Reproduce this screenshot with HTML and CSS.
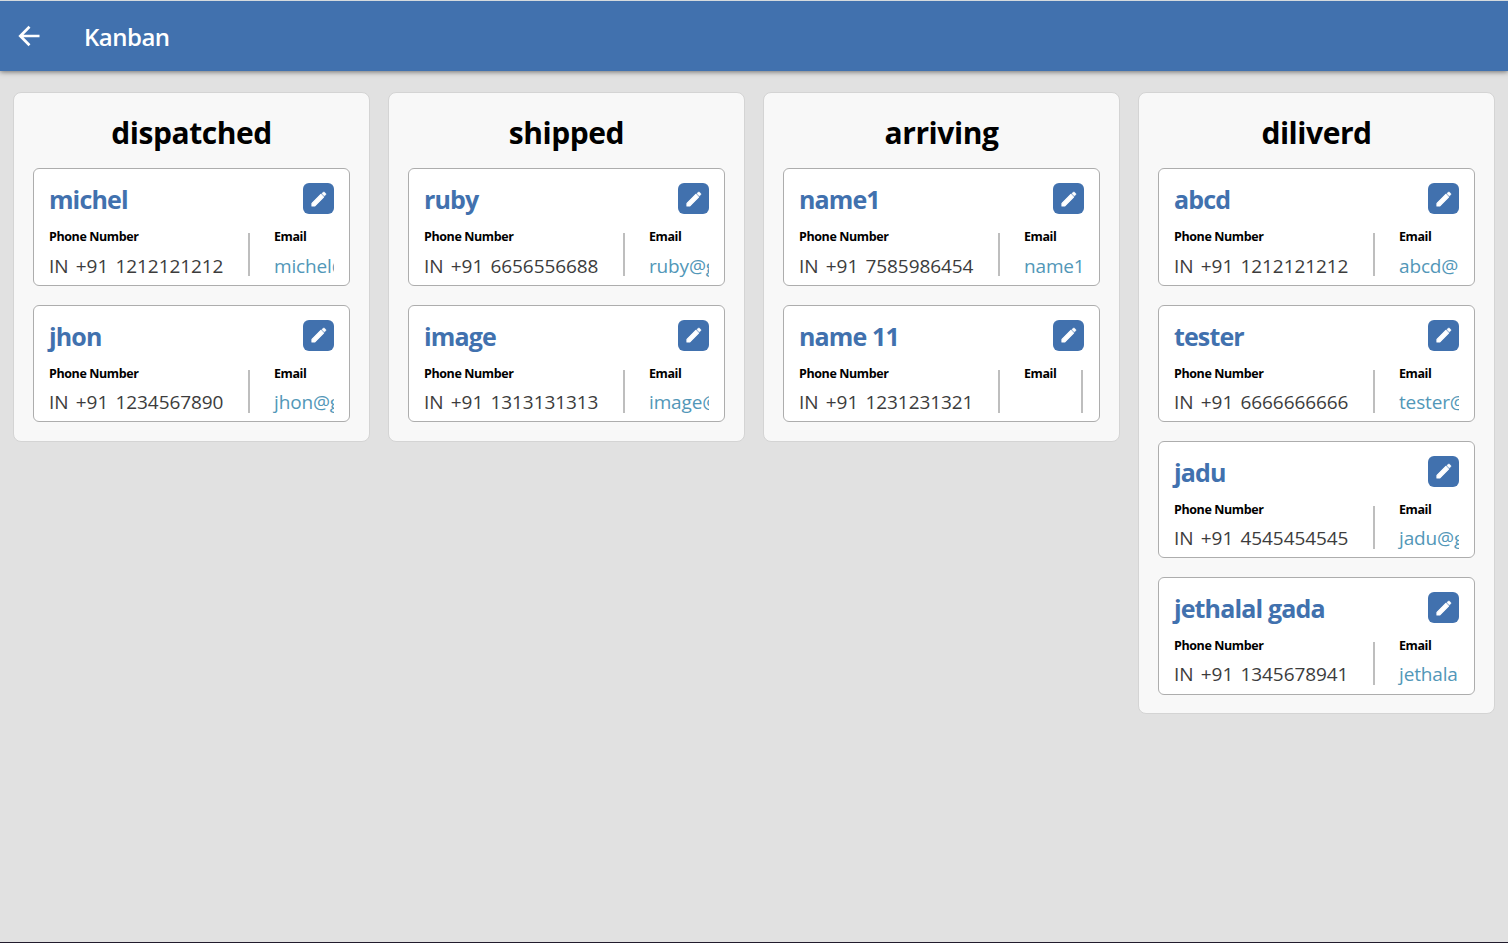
FILE: index.html
```html
<!DOCTYPE html>
<html lang="en">
<head>
<meta charset="utf-8">
<title>Kanban</title>
<link rel="stylesheet" href="styles.css">
</head>
<body>
<svg width="0" height="0" class="defs">
  <symbol id="pencil" viewBox="0 0 16 16">
    <path d="M1 15v-2.600L9.900 3.500l2.600 2.600L3.600 15z" stroke="#fff" stroke-width="1.200" stroke-linejoin="round"/>
    <path d="M10.900 2.600l1.100-1.100a1.300 1.300 0 0 1 1.800 0l.700.700a1.300 1.300 0 0 1 0 1.800l-1.100 1.100z" stroke="#fff" stroke-width=".6"/>
  </symbol>
</svg>
<header class="topbar">
  <svg class="back" viewBox="0 0 24 24"><path d="M22.500 12H4M12.500 2.800L3.300 12l9.200 9.200"/></svg>
  <h1 class="title">Kanban</h1>
</header>
<main class="board">
  <section class="column">
    <h2 class="heading">dispatched</h2>
    <article class="card">
      <div class="top"><h3 class="name">michel</h3><span class="edit"><svg><use href="#pencil"/></svg></span></div>
      <div class="fields"><div class="field phone"><b>Phone Number</b><span>IN +91 1212121212</span></div><div class="field email"><b>Email</b><a>michel@</a></div></div>
    </article>
    <article class="card">
      <div class="top"><h3 class="name">jhon</h3><span class="edit"><svg><use href="#pencil"/></svg></span></div>
      <div class="fields"><div class="field phone"><b>Phone Number</b><span>IN +91 1234567890</span></div><div class="field email"><b>Email</b><a>jhon@g</a></div></div>
    </article>
  </section>
  <section class="column">
    <h2 class="heading">shipped</h2>
    <article class="card">
      <div class="top"><h3 class="name">ruby</h3><span class="edit"><svg><use href="#pencil"/></svg></span></div>
      <div class="fields"><div class="field phone"><b>Phone Number</b><span>IN +91 6656556688</span></div><div class="field email"><b>Email</b><a>ruby@g</a></div></div>
    </article>
    <article class="card">
      <div class="top"><h3 class="name">image</h3><span class="edit"><svg><use href="#pencil"/></svg></span></div>
      <div class="fields"><div class="field phone"><b>Phone Number</b><span>IN +91 1313131313</span></div><div class="field email"><b>Email</b><a>image@</a></div></div>
    </article>
  </section>
  <section class="column">
    <h2 class="heading">arriving</h2>
    <article class="card">
      <div class="top"><h3 class="name">name1</h3><span class="edit"><svg><use href="#pencil"/></svg></span></div>
      <div class="fields"><div class="field phone"><b>Phone Number</b><span>IN +91 7585986454</span></div><div class="field email"><b>Email</b><a>name1</a></div></div>
    </article>
    <article class="card">
      <div class="top"><h3 class="name">name 11</h3><span class="edit"><svg><use href="#pencil"/></svg></span></div>
      <div class="fields"><div class="field phone"><b>Phone Number</b><span>IN +91 1231231321</span></div><div class="field email empty"><b>Email</b></div></div>
    </article>
  </section>
  <section class="column">
    <h2 class="heading">diliverd</h2>
    <article class="card">
      <div class="top"><h3 class="name">abcd</h3><span class="edit"><svg><use href="#pencil"/></svg></span></div>
      <div class="fields"><div class="field phone"><b>Phone Number</b><span>IN +91 1212121212</span></div><div class="field email"><b>Email</b><a>abcd@</a></div></div>
    </article>
    <article class="card">
      <div class="top"><h3 class="name">tester</h3><span class="edit"><svg><use href="#pencil"/></svg></span></div>
      <div class="fields"><div class="field phone"><b>Phone Number</b><span>IN +91 6666666666</span></div><div class="field email"><b>Email</b><a>tester@</a></div></div>
    </article>
    <article class="card">
      <div class="top"><h3 class="name">jadu</h3><span class="edit"><svg><use href="#pencil"/></svg></span></div>
      <div class="fields"><div class="field phone"><b>Phone Number</b><span>IN +91 4545454545</span></div><div class="field email"><b>Email</b><a>jadu@g</a></div></div>
    </article>
    <article class="card">
      <div class="top"><h3 class="name">jethalal gada</h3><span class="edit"><svg><use href="#pencil"/></svg></span></div>
      <div class="fields"><div class="field phone"><b>Phone Number</b><span>IN +91 1345678941</span></div><div class="field email"><b>Email</b><a>jethalal</a></div></div>
    </article>
  </section>
</main>
</body>
</html>
```
FILE: styles.css
```css
* { box-sizing: border-box; }
body {
  margin: 0;
  height: 943px;
  overflow: hidden;
  display: flex;
  flex-direction: column;
  background: #e1e1e1;
  border-top: 1px solid #d5dadd;
  border-bottom: 1px solid #211b2c;
  font-family: "Open Sans", "Noto Sans", sans-serif;
}
.defs { display: none; }
h1, h2, h3 { margin: 0; white-space: nowrap; }
.topbar {
  flex: none;
  height: 70px;
  padding-left: 17px;
  display: flex;
  align-items: center;
  background: #4171ae;
  box-shadow: 0 1px 5px rgba(0, 0, 0, .5);
}
.back {
  width: 24px;
  height: 24px;
  fill: none;
  stroke: #fff;
  stroke-width: 2.7;
}
.title {
  margin-left: 43px;
  padding-top: 2px;
  color: #fff;
  font-size: 24px;
  font-weight: 600;
  line-height: 32px;
  letter-spacing: -.5px;
}
.board {
  flex: 1;
  padding: 22px 13px 0;
  display: flex;
  align-items: flex-start;
  gap: 18px;
}
.column {
  flex: none;
  width: 357px;
  margin-top: -1px;
  padding: 19px 19px 18.75px;
  display: flex;
  flex-direction: column;
  gap: 18.75px;
  background: #f8f8f8;
  border: 1px solid #d4d4d4;
  border-radius: 8px;
}
.heading {
  height: 37.5px;
  text-align: center;
  color: #000;
  font-size: 30px;
  font-weight: 700;
  line-height: 41px;
  letter-spacing: -.45px;
}
.card {
  width: 317px;
  height: 117.5px;
  padding: 14px 15px 0;
  background: #fff;
  border: 1px solid #adadad;
  border-radius: 6px;
}
.top {
  height: 31px;
  display: flex;
  justify-content: space-between;
}
.name {
  color: #4171ae;
  font-size: 25px;
  font-weight: 700;
  line-height: 32px;
  letter-spacing: -.85px;
}
.name:first-letter { letter-spacing: -.95px; }
.edit {
  width: 31px;
  height: 31px;
  display: flex;
  align-items: center;
  justify-content: center;
  background: #4171ae;
  border-radius: 6px;
}
.edit svg { width: 16px; height: 16px; fill: #fff; }
.fields {
  height: 62px;
  margin-top: 9px;
  padding-top: 10px;
  display: flex;
  overflow: hidden;
}
.field {
  flex: none;
  height: 43px;
  display: flex;
  flex-direction: column;
  border-right: 2px solid #bebebe;
  white-space: nowrap;
}
.phone { width: 201px; margin-right: 24px; }
.email { width: 100px; }
.empty { width: 59px; }
.field b {
  color: #000;
  font-size: 12.5px;
  line-height: 17px;
  margin-top: -5px;
  letter-spacing: -.4px;
}
.field span, .field a {
  margin-top: 6.25px;
  font-size: 19px;
  line-height: 28px;
}
.field span { color: #3c3c3c; letter-spacing: -.08px; word-spacing: 2.5px; }
.field a { color: #5297b8; letter-spacing: -.15px; }
```
